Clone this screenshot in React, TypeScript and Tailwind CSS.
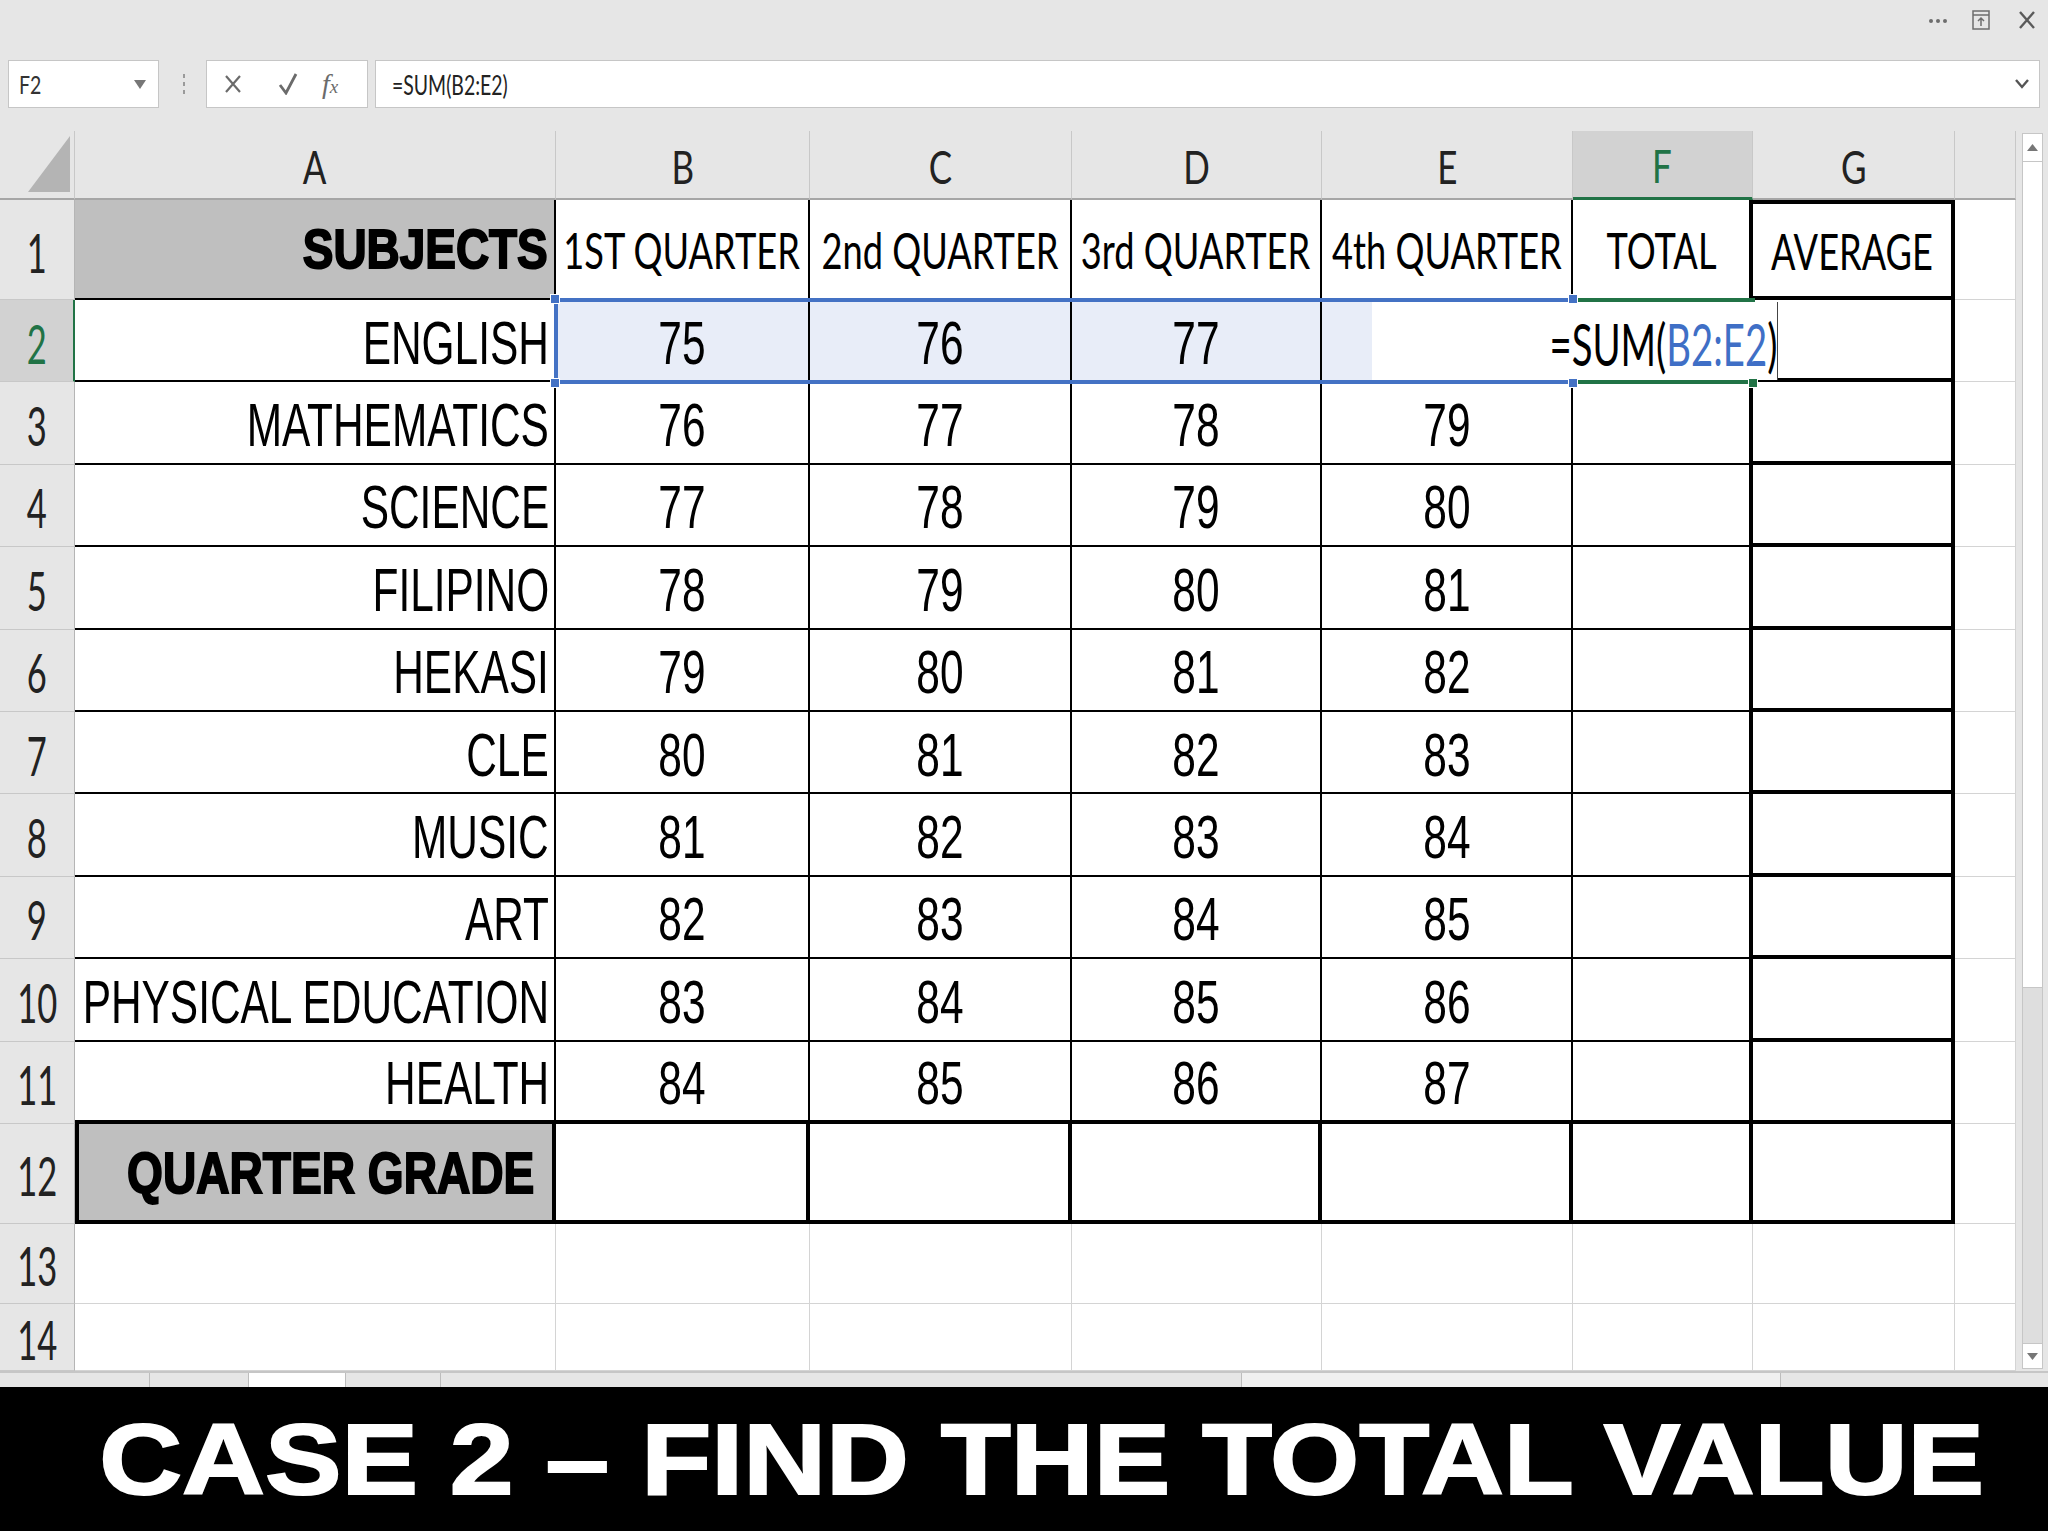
import React from "react";

type Subject = { name: string; scores: (number | null)[] };

const subjects: Subject[] = [
  { name: "ENGLISH", scores: [75, 76, 77, null] },
  { name: "MATHEMATICS", scores: [76, 77, 78, 79] },
  { name: "SCIENCE", scores: [77, 78, 79, 80] },
  { name: "FILIPINO", scores: [78, 79, 80, 81] },
  { name: "HEKASI", scores: [79, 80, 81, 82] },
  { name: "CLE", scores: [80, 81, 82, 83] },
  { name: "MUSIC", scores: [81, 82, 83, 84] },
  { name: "ART", scores: [82, 83, 84, 85] },
  { name: "PHYSICAL EDUCATION", scores: [83, 84, 85, 86] },
  { name: "HEALTH", scores: [84, 85, 86, 87] },
];

const quarters = ["1ST QUARTER", "2nd QUARTER", "3rd QUARTER", "4th QUARTER"];
const letters = ["A", "B", "C", "D", "E", "F", "G", ""];

const LATO = "font-['Lato',sans-serif]";
const ARIAL = "font-['Liberation_Sans',Arial,sans-serif]";

// border of a sheet cell, by row (1..14) and column (0 = A .. 7 = H)
function cellBorder(r: number, c: number) {
  const inTable = r >= 1 && r <= 11 && c <= 5;
  const gBox = r >= 1 && r <= 11 && c === 6;
  const row12 = r === 12 && c <= 6;

  let right = "border-r border-r-[#d4d4d4]";
  if (row12 || gBox || (inTable && c === 5)) right = "border-r-4 border-r-black";
  else if (inTable) right = "border-r-2 border-r-black";

  let bottom = "border-b border-b-[#d4d4d4]";
  if (row12 || gBox || (r === 11 && c <= 6)) bottom = "border-b-4 border-b-black";
  else if (inTable) bottom = "border-b-2 border-b-black";

  let extra = "";
  if (r === 1 && c === 6) extra = "border-t-4 border-t-black";
  if (r === 12 && c === 0) extra = "border-l-4 border-l-black";
  return `${right} ${bottom} ${extra}`;
}

function BodyText({ children, align }: { children: React.ReactNode; align: "right" | "center" }) {
  return (
    <span
      className={`inline-block whitespace-nowrap ${ARIAL} text-[61px] leading-none text-black scale-x-[0.695] ${
        align === "right" ? "origin-right" : "origin-center"
      }`}
    >
      {children}
    </span>
  );
}

function cellContent(r: number, c: number): React.ReactNode {
  if (r === 1) {
    if (c === 0)
      return (
        <div className="flex h-full items-center justify-end pr-[6px]">
          <span className={`inline-block whitespace-nowrap ${ARIAL} text-[56px] font-bold leading-none origin-right scale-x-[0.82] [-webkit-text-stroke:2px_black]`}>
            SUBJECTS
          </span>
        </div>
      );
    const label = c <= 4 ? quarters[c - 1] : c === 5 ? "TOTAL" : c === 6 ? "AVERAGE" : "";
    if (!label) return null;
    return (
      <div className="flex h-full items-center justify-center">
        <span className={`inline-block whitespace-nowrap ${LATO} text-[51px] leading-none text-black scale-x-[0.71]`}>
          {label}
        </span>
      </div>
    );
  }
  if (r >= 2 && r <= 11) {
    const s = subjects[r - 2];
    if (c === 0)
      return (
        <div className="flex h-full items-center justify-end pr-[5px] pt-[6px]">
          <BodyText align="right">{s.name}</BodyText>
        </div>
      );
    if (c >= 1 && c <= 4 && s.scores[c - 1] !== null)
      return (
        <div className="flex h-full items-center justify-center pt-[6px]">
          <BodyText align="center">{s.scores[c - 1]}</BodyText>
        </div>
      );
    return null;
  }
  if (r === 12 && c === 0)
    return (
      <div className="flex h-full items-center justify-end pr-[18px] pt-[2px]">
        <span className={`inline-block whitespace-nowrap ${ARIAL} text-[58px] font-bold leading-none origin-right scale-x-[0.795] [-webkit-text-stroke:2px_black]`}>
          QUARTER GRADE
        </span>
      </div>
    );
  return null;
}

function cellFill(r: number, c: number) {
  if ((r === 1 || r === 12) && c === 0) return "bg-[#bfbfbf]";
  if (r === 2 && c >= 1 && c <= 4) return "bg-[#e8edf8]";
  return "bg-white";
}

function TitleStrip() {
  return (
    <div className="flex h-[60px] shrink-0 items-start justify-end pr-[12px] pt-[10px]">
      <svg width="20" height="20" viewBox="0 0 20 20" className="mt-[1px]">
        <circle cx="3" cy="10" r="2" fill="#6d6d6d" />
        <circle cx="10" cy="10" r="2" fill="#6d6d6d" />
        <circle cx="17" cy="10" r="2" fill="#6d6d6d" />
      </svg>
      <svg width="18" height="20" viewBox="0 0 18 20" className="ml-[24px]">
        <rect x="1" y="1" width="16" height="18" fill="none" stroke="#6d6d6d" strokeWidth="1.5" />
        <line x1="1" y1="5" x2="17" y2="5" stroke="#6d6d6d" strokeWidth="1.5" />
        <path d="M9 16 V8 M6 11 L9 8 L12 11" fill="none" stroke="#6d6d6d" strokeWidth="1.5" />
      </svg>
      <svg width="18" height="20" viewBox="0 0 18 20" className="ml-[28px]">
        <path d="M2 2 L16 18 M16 2 L2 18" stroke="#5a5a5a" strokeWidth="2.4" />
      </svg>
    </div>
  );
}

function FormulaBar() {
  return (
    <div className="flex h-[48px] shrink-0 items-stretch">
      <div className="ml-[8px] flex w-[151px] items-center justify-between border border-[#c6c6c6] bg-white pl-[10px] pr-[12px]">
        <span className={`inline-block origin-left scale-x-[0.78] ${LATO} text-[25px] leading-none text-[#333]`}>F2</span>
        <svg width="12" height="9" viewBox="0 0 12 9">
          <path d="M0 0 H12 L6 9 Z" fill="#777" />
        </svg>
      </div>
      <div className="ml-[23px] flex w-[3px] flex-col items-center justify-center gap-[4px]">
        <div className="h-[4px] w-[2px] bg-[#9a9a9a]" />
        <div className="h-[4px] w-[2px] bg-[#9a9a9a]" />
        <div className="h-[4px] w-[2px] bg-[#9a9a9a]" />
      </div>
      <div className="ml-[21px] flex w-[162px] items-center border border-[#c6c6c6] bg-white pl-[17px]">
        <svg width="18" height="20" viewBox="0 0 18 20">
          <path d="M2 2 L16 18 M16 2 L2 18" stroke="#6b6b6b" strokeWidth="2.2" />
        </svg>
        <svg width="20" height="22" viewBox="0 0 20 22" className="ml-[36px]">
          <path d="M2 12 L8 20 L18 1" fill="none" stroke="#6b6b6b" strokeWidth="2.8" />
        </svg>
        <span className="ml-[24px] font-['Liberation_Serif',serif] text-[28px] italic leading-none text-[#6b6b6b]">
          f<span className="text-[19px]">x</span>
        </span>
      </div>
      <div className="ml-[7px] mr-[8px] flex flex-1 items-center justify-between border border-[#c6c6c6] bg-white pl-[16px] pr-[10px]">
        <span className={`inline-block origin-left scale-x-[0.72] ${LATO} text-[27px] leading-none text-[#222]`}>=SUM(B2:E2)</span>
        <svg width="14" height="10" viewBox="0 0 14 10">
          <path d="M1 1 L7 8 L13 1" fill="none" stroke="#555" strokeWidth="2.4" />
        </svg>
      </div>
    </div>
  );
}

function Sheet() {
  const rows = Array.from({ length: 14 }, (_, i) => i + 1);
  return (
    <div className="relative grid w-[2016px] shrink-0 grid-cols-[75px_481px_254px_262px_250px_251px_180px_202px_61px] grid-rows-[69px_100px_repeat(10,82.4px)_100px_80px_67px] bg-white">
      {/* corner */}
      <div className="flex items-end justify-end border-r border-b-2 border-r-[#c8c8c8] border-b-[#a6a6a6] bg-[#e6e6e6] pr-[4px] pb-[6px]">
        <svg width="42" height="56" viewBox="0 0 42 56">
          <path d="M42 0 V56 H0 Z" fill="#b4b4b4" />
        </svg>
      </div>
      {/* column letters */}
      {letters.map((l, i) => (
        <div
          key={`h${i}`}
          className={`flex items-center justify-center border-r border-r-[#c8c8c8] ${
            l === "F" ? "border-b-[3px] border-b-[#217346] bg-[#d2d2d2] text-[#217346]" : "border-b-2 border-b-[#a6a6a6] bg-[#e6e6e6] text-[#222]"
          }`}
        >
          <span className={`inline-block scale-x-[0.76] ${LATO} text-[46px] leading-none pt-[4px]`}>{l}</span>
        </div>
      ))}
      {rows.map((r) => (
        <React.Fragment key={r}>
          <div
            className={`flex items-center justify-center border-b border-b-[#c8c8c8] ${
              r === 2 ? "border-r-2 border-r-[#217346] bg-[#d2d2d2] text-[#217346]" : "border-r border-r-[#b5b5b5] bg-[#e6e6e6] text-[#222]"
            }`}
          >
            <span className={`inline-block scale-x-[0.64] ${LATO} text-[54px] leading-none pt-[6px]`}>{r}</span>
          </div>
          {letters.map((_, c) => (
            <div key={c} className={`overflow-visible ${cellFill(r, c)} ${cellBorder(r, c)}`}>
              {cellContent(r, c)}
            </div>
          ))}
        </React.Fragment>
      ))}

      {/* B2:E2 range outline */}
      <div className="pointer-events-none absolute left-[554px] top-[167px] h-[86px] w-[1021px] border-4 border-[#4472c4]" />
      {/* active cell F2 */}
      <div className="pointer-events-none absolute left-[1573px] top-[167px] h-[86px] w-[182px] border-y-4 border-[#217346]" />
      {/* in-cell editor */}
      <div className="absolute left-[1372px] top-[171px] flex h-[78px] w-[406px] items-center justify-end border-r border-r-[#444] bg-white pt-[6px]">
        <span className={`inline-block whitespace-nowrap origin-right scale-x-[0.66] ${LATO} text-[58px] leading-none text-black`}>
          =SUM(<span className="text-[#3f6fc6]">B2:E2</span>)
        </span>
      </div>
      {/* handles */}
      <div className="absolute left-[550px] top-[163px] h-[10px] w-[10px] border border-white bg-[#4472c4]" />
      <div className="absolute left-[550px] top-[247px] h-[10px] w-[10px] border border-white bg-[#4472c4]" />
      <div className="absolute left-[1568px] top-[163px] h-[10px] w-[10px] border border-white bg-[#4472c4]" />
      <div className="absolute left-[1568px] top-[247px] h-[10px] w-[10px] border border-white bg-[#4472c4]" />
      <div className="absolute left-[1748px] top-[247px] h-[10px] w-[10px] border border-white bg-[#217346]" />
    </div>
  );
}

function ScrollBar() {
  return (
    <div className="ml-[6px] mt-[2px] mb-[2px] flex w-[21px] flex-col border border-[#c6c6c6] bg-[#dedede]">
      <div className="flex h-[28px] items-center justify-center border-b border-b-[#c6c6c6] bg-white">
        <svg width="11" height="7" viewBox="0 0 11 7">
          <path d="M0 7 L5.5 0 L11 7 Z" fill="#777" />
        </svg>
      </div>
      <div className="h-[826px] border-b border-b-[#c6c6c6] bg-white" />
      <div className="flex-1" />
      <div className="flex h-[25px] items-center justify-center border-t border-t-[#c6c6c6] bg-white">
        <svg width="11" height="7" viewBox="0 0 11 7">
          <path d="M0 0 L5.5 7 L11 0 Z" fill="#777" />
        </svg>
      </div>
    </div>
  );
}

function SheetTabs() {
  return (
    <div className="flex h-[16px] shrink-0 border-t-2 border-t-[#c6c6c6] bg-[#e6e6e6]">
      <div className="w-[150px] border-r border-r-[#bdbdbd]" />
      <div className="w-[99px] border-r border-r-[#bdbdbd]" />
      <div className="w-[96px] bg-white" />
      <div className="w-[96px] border-r border-l border-[#bdbdbd]" />
      <div className="w-[800px]" />
      <div className="w-[540px] border-x border-x-[#bdbdbd] bg-[#f0f0f0]" />
    </div>
  );
}

export default function App() {
  return (
    <div className="flex h-[1536px] w-[2048px] flex-col overflow-hidden bg-[#e6e6e6]">
      <TitleStrip />
      <FormulaBar />
      <div className="h-[23px] shrink-0" />
      <div className="flex h-[1240px] shrink-0">
        <Sheet />
        <ScrollBar />
      </div>
      <SheetTabs />
      <div className="flex h-[144px] shrink-0 items-center justify-center bg-black pl-[36px]">
        <span className={`inline-block whitespace-nowrap scale-x-[1.136] ${ARIAL} text-[101px] font-bold leading-none text-white [-webkit-text-stroke:2px_white]`}>
          CASE 2 – FIND THE TOTAL VALUE
        </span>
      </div>
      <div className="h-[5px] shrink-0 bg-white" />
    </div>
  );
}
